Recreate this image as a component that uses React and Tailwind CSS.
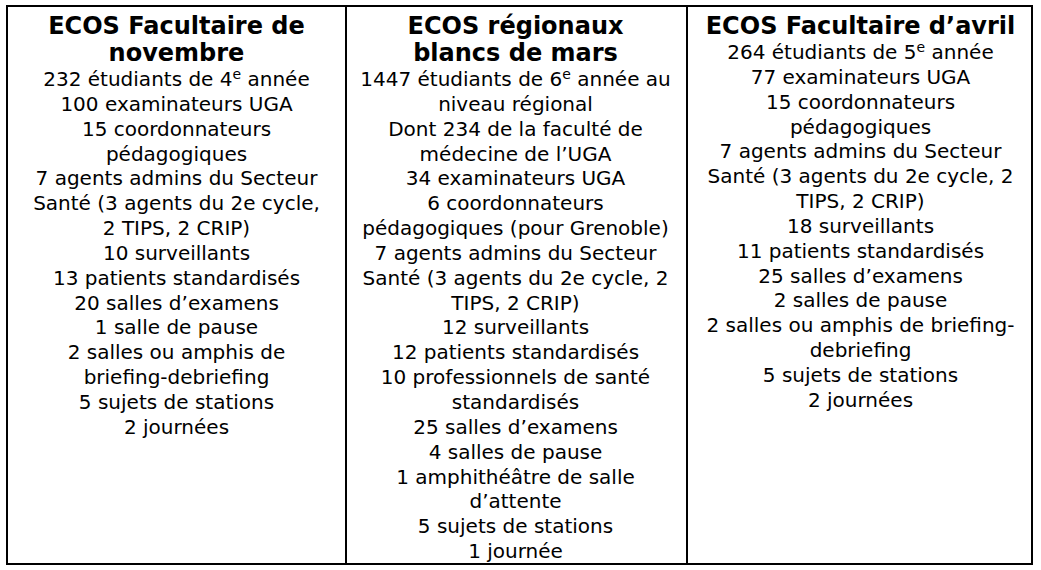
import React from "react";

const E = () => <span className="text-[14px] leading-[0] relative -top-[7px]">e</span>;

const col1 = {
  head: ["ECOS Facultaire de", "novembre"],
  lines: [
    <>232 étudiants de 4<E /> année</>,
    "100 examinateurs UGA",
    "15 coordonnateurs",
    "pédagogiques",
    "7 agents admins du Secteur",
    "Santé (3 agents du 2e cycle,",
    "2 TIPS, 2 CRIP)",
    "10 surveillants",
    "13 patients standardisés",
    "20 salles d’examens",
    "1 salle de pause",
    "2 salles ou amphis de",
    "briefing-debriefing",
    "5 sujets de stations",
    "2 journées",
  ],
};

const col2 = {
  head: ["ECOS régionaux", "blancs de mars"],
  lines: [
    <>1447 étudiants de 6<E /> année au</>,
    "niveau régional",
    "Dont 234 de la faculté de",
    "médecine de l’UGA",
    "34 examinateurs UGA",
    "6 coordonnateurs",
    "pédagogiques (pour Grenoble)",
    "7 agents admins du Secteur",
    "Santé (3 agents du 2e cycle, 2",
    "TIPS, 2 CRIP)",
    "12 surveillants",
    "12 patients standardisés",
    "10 professionnels de santé",
    "standardisés",
    "25 salles d’examens",
    "4 salles de pause",
    "1 amphithéâtre de salle",
    "d’attente",
    "5 sujets de stations",
    "1 journée",
  ],
};

const col3 = {
  head: ["ECOS Facultaire d’avril"],
  lines: [
    <>264 étudiants de 5<E /> année</>,
    "77 examinateurs UGA",
    "15 coordonnateurs",
    "pédagogiques",
    "7 agents admins du Secteur",
    "Santé (3 agents du 2e cycle, 2",
    "TIPS, 2 CRIP)",
    "18 surveillants",
    "11 patients standardisés",
    "25 salles d’examens",
    "2 salles de pause",
    "2 salles ou amphis de briefing-",
    "debriefing",
    "5 sujets de stations",
    "2 journées",
  ],
};

function Column({ data, className }) {
  return (
    <div className={"flex flex-col items-center pt-[6px] text-black " + className}>
      <div className="font-bold text-[24px] leading-[27px] text-center">
        {data.head.map((h, i) => (
          <div key={i} className="whitespace-nowrap">{h}</div>
        ))}
      </div>
      <div className="text-[20px] leading-[24.85px] text-center">
        {data.lines.map((l, i) => (
          <div key={i} className="whitespace-nowrap">{l}</div>
        ))}
      </div>
    </div>
  );
}

export default function App() {
  return (
    <div className="w-[1041px] h-[570px] bg-white pt-[5px] pl-[6px]" style={{ fontFamily: '"DejaVu Sans", Verdana, sans-serif' }}>
      <div className="w-[1027px] h-[560px] border-2 border-black grid grid-cols-[337px_341px_341px]">
        <Column data={col1} className="border-r-2 border-black w-[339px]" />
        <Column data={col2} className="border-r-2 border-black w-[343px]" />
        <Column data={col3} className="w-[341px] pl-[8px]" />
      </div>
    </div>
  );
}
